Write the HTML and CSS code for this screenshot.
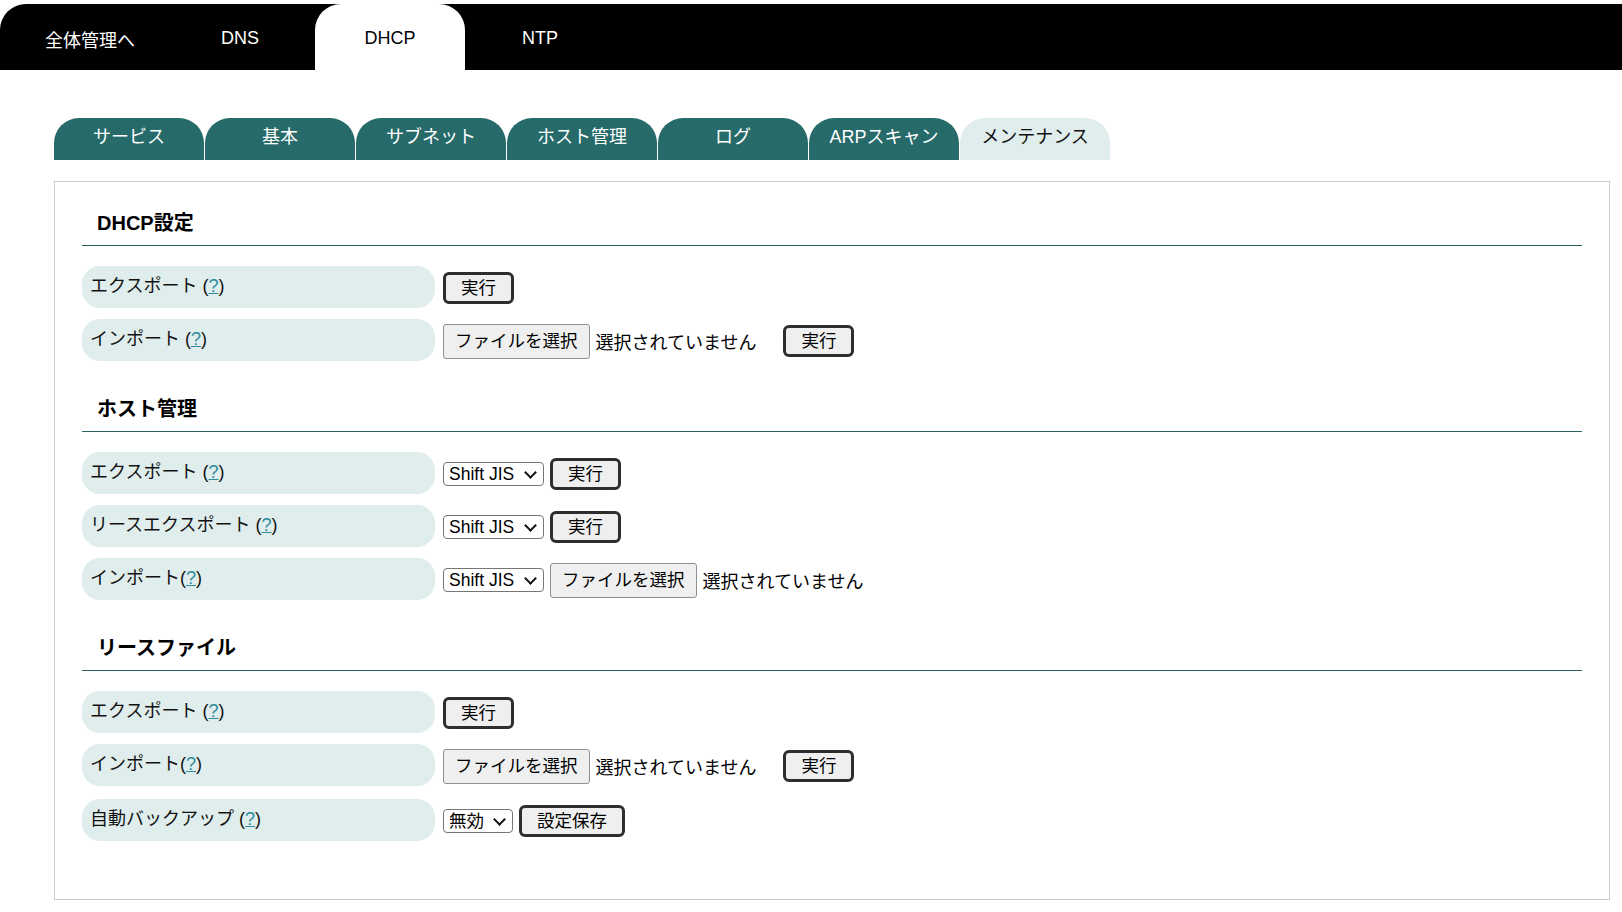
FILE: index.html
```html
<!DOCTYPE html>
<html lang="ja">
<head>
<meta charset="utf-8">
<title>DHCP メンテナンス</title>
<link rel="stylesheet" href="styles.css">
</head>
<body>
<nav class="topnav">
  <a class="topnav-item first">全体管理へ</a>
  <a class="topnav-item">DNS</a>
  <a class="topnav-item active">DHCP</a>
  <a class="topnav-item">NTP</a>
</nav>
<main class="main">
  <div class="tabs">
    <a class="tab">サービス</a>
    <a class="tab">基本</a>
    <a class="tab">サブネット</a>
    <a class="tab">ホスト管理</a>
    <a class="tab">ログ</a>
    <a class="tab">ARPスキャン</a>
    <a class="tab current">メンテナンス</a>
  </div>
  <div class="panel">
    <section class="section">
      <h3 class="section-title">DHCP設定</h3>
      <div class="row">
        <div class="label">エクスポート (<a class="help">?</a>)</div>
        <div class="controls"><button class="btn">実行</button></div>
      </div>
      <div class="row">
        <div class="label">インポート (<a class="help">?</a>)</div>
        <div class="controls">
          <span class="file"><button class="file-btn">ファイルを選択</button><span class="file-name">選択されていません</span></span>
          <button class="btn push">実行</button>
        </div>
      </div>
    </section>
    <section class="section">
      <h3 class="section-title">ホスト管理</h3>
      <div class="row">
        <div class="label">エクスポート (<a class="help">?</a>)</div>
        <div class="controls">
          <span class="sel-wrap"><select class="sel sel-enc"><option>Shift JIS</option><option>UTF-8</option></select></span>
          <button class="btn">実行</button>
        </div>
      </div>
      <div class="row">
        <div class="label">リースエクスポート (<a class="help">?</a>)</div>
        <div class="controls">
          <span class="sel-wrap"><select class="sel sel-enc"><option>Shift JIS</option><option>UTF-8</option></select></span>
          <button class="btn">実行</button>
        </div>
      </div>
      <div class="row">
        <div class="label">インポート(<a class="help">?</a>)</div>
        <div class="controls">
          <span class="sel-wrap"><select class="sel sel-enc"><option>Shift JIS</option><option>UTF-8</option></select></span>
          <span class="file"><button class="file-btn">ファイルを選択</button><span class="file-name">選択されていません</span></span>
        </div>
      </div>
    </section>
    <section class="section">
      <h3 class="section-title">リースファイル</h3>
      <div class="row">
        <div class="label">エクスポート (<a class="help">?</a>)</div>
        <div class="controls"><button class="btn">実行</button></div>
      </div>
      <div class="row">
        <div class="label">インポート(<a class="help">?</a>)</div>
        <div class="controls">
          <span class="file"><button class="file-btn">ファイルを選択</button><span class="file-name">選択されていません</span></span>
          <button class="btn push">実行</button>
        </div>
      </div>
      <div class="row row-last">
        <div class="label">自動バックアップ (<a class="help">?</a>)</div>
        <div class="controls">
          <span class="sel-wrap"><select class="sel sel-mode"><option>無効</option><option>有効</option></select></span>
          <button class="btn btn-wide">設定保存</button>
        </div>
      </div>
    </section>
  </div>
</main>
</body>
</html>
```

FILE: styles.css
```css
* { box-sizing: border-box; }

html, body {
  margin: 0;
  padding: 0;
  background: #ffffff;
}

body {
  padding-top: 4px;
  font-family: "Liberation Sans", "Noto Sans CJK JP", sans-serif;
  color: #111;
}

/* top navigation */
.topnav {
  display: flex;
  height: 66px;
  background: #000;
  border-top-left-radius: 26px;
  padding-left: 15px;
}

.topnav-item {
  width: 150px;
  text-align: center;
  color: #fff;
  font-size: 18px;
  line-height: 24px;
  padding-top: 22px;
  cursor: pointer;
}

.topnav-item.first {
  padding-top: 25px;
}

.topnav-item.active {
  background: #fff;
  color: #000;
  border-radius: 26px 26px 0 0;
}

/* main */
.main {
  margin: 48px 12px 0 54px;
}

.tabs {
  display: flex;
  gap: 1px;
}

.tab {
  width: 150px;
  height: 42px;
  line-height: 38px;
  text-align: center;
  font-size: 18px;
  color: #fff;
  background: #266a6a;
  border-radius: 25px 25px 0 0;
  cursor: pointer;
}

.tab.current {
  background: #e0eded;
  color: #111;
}

.panel {
  margin-top: 21px;
  border: 1px solid #cccccc;
  padding: 28px 27px 58px;
}

.section + .section {
  margin-top: 35px;
}

.section-title {
  margin: 0 0 20px;
  padding: 1px 0 10px 15px;
  font-size: 20px;
  line-height: 24px;
  font-weight: bold;
  color: #000;
  border-bottom: 1px solid #2d6262;
}

.row {
  display: flex;
  align-items: center;
  height: 42px;
}

.row + .row {
  margin-top: 11px;
}

.row-last {
  margin-top: 13px !important;
}

.label {
  width: 353px;
  height: 42px;
  flex: none;
  background: #e0eded;
  border-radius: 18px;
  padding-left: 8px;
  font-size: 18px;
  line-height: 40px;
  color: #111;
}

.help {
  color: #2f8b9b;
  text-decoration: underline;
  cursor: pointer;
}

.controls {
  margin-left: 8px;
  display: flex;
  align-items: center;
  gap: 6px;
  padding-top: 2px;
}

.btn {
  font-family: "Liberation Sans", "Noto Sans CJK JP", sans-serif;
  font-size: 17.5px;
  line-height: 22px;
  height: 32px;
  padding: 2px 15px;
  border: 3px solid #2e2e2e;
  border-radius: 6px;
  background: #efefef;
  color: #000;
  cursor: pointer;
}

.btn-wide {
  padding: 2px 15px;
}

.btn.push {
  margin-left: 21px;
}

.file {
  display: inline-flex;
  align-items: center;
}

.file-btn {
  font-family: "Liberation Sans", "Noto Sans CJK JP", sans-serif;
  font-size: 17.5px;
  line-height: 22px;
  height: 35px;
  padding: 0 11px;
  border: 1px solid #8f8f8f;
  border-radius: 3px;
  background: #efefef;
  color: #000;
}

.file-name {
  margin-left: 6px;
  font-size: 18px;
  color: #000;
}

.sel-wrap {
  position: relative;
  display: inline-flex;
}

.sel-wrap::after {
  content: "";
  position: absolute;
  right: 9px;
  top: 6px;
  width: 7px;
  height: 7px;
  border-right: 2px solid #111;
  border-bottom: 2px solid #111;
  transform: rotate(45deg);
  pointer-events: none;
}

.sel {
  appearance: none;
  -webkit-appearance: none;
  font-family: "Liberation Sans", "Noto Sans CJK JP", sans-serif;
  font-size: 17.5px;
  line-height: 22px;
  height: 24px;
  padding: 0 0 0 5px;
  border: 1px solid #767676;
  border-radius: 4px;
  background: #fff;
  color: #000;
}

.sel-enc { width: 101px; }
.sel-mode { width: 70px; }
```
